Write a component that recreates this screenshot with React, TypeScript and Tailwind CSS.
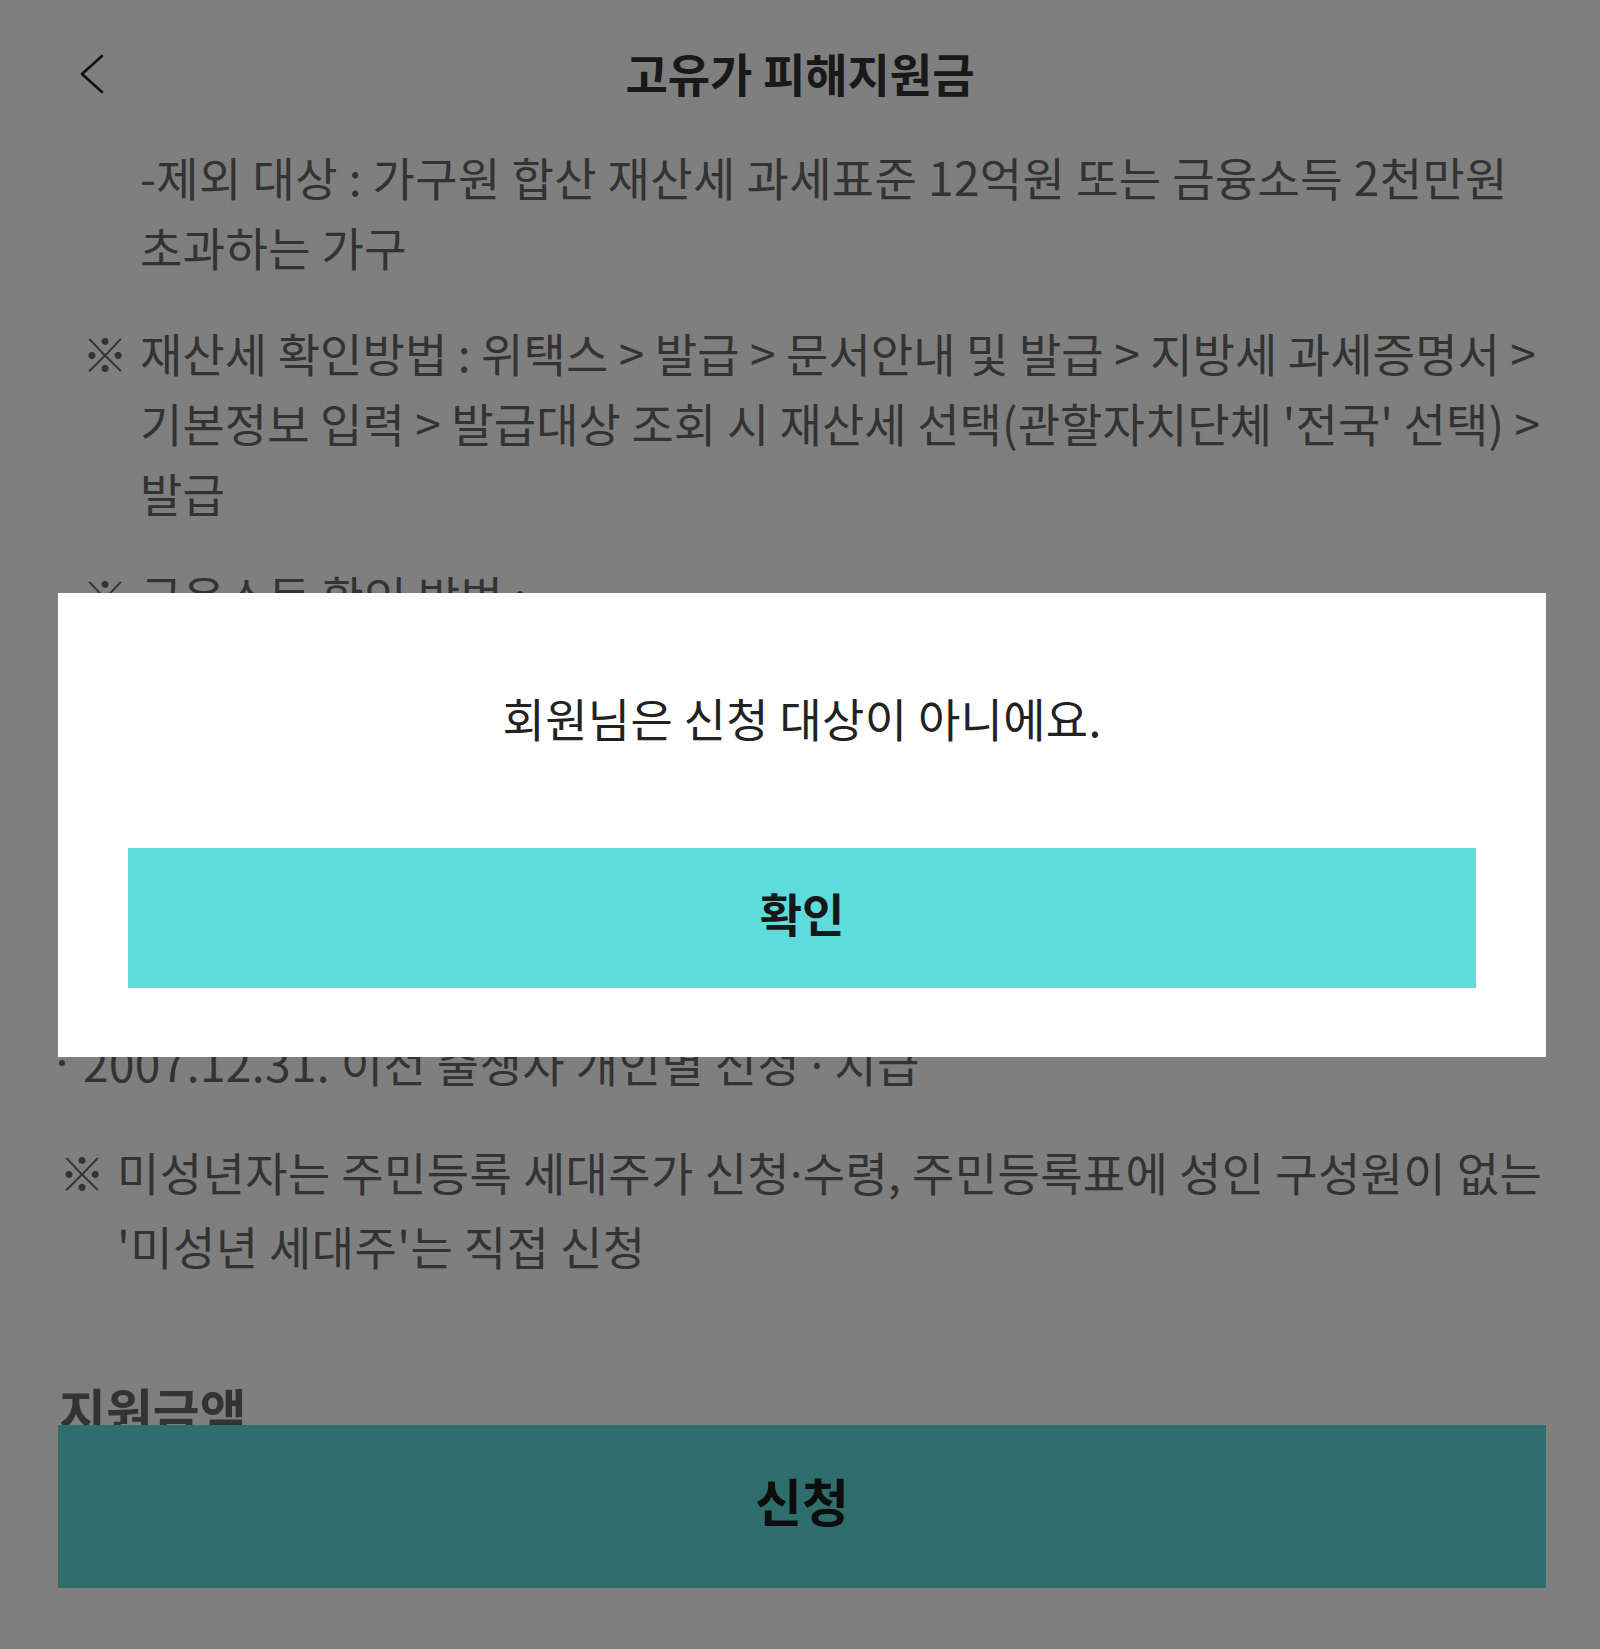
import { useState } from "react";

const font = "font-['Noto_Sans_CJK_KR','Noto_Sans',sans-serif]";

function Marker({ children, w = "w-[58px]" }: { children?: React.ReactNode; w?: string }) {
  return <span className={`${w} shrink-0`}>{children}</span>;
}

// 가운뎃점은 좁은 글꼴로
function Dot() {
  return <span className="font-['Noto_Sans',sans-serif]">·</span>;
}

export default function App() {
  const [open, setOpen] = useState(true);

  return (
    <div className={`min-h-screen w-full bg-white ${font}`}>
      {/* 헤더 */}
      <header className="grid h-[144px] grid-cols-[1fr_auto_1fr] items-center">
        <div className="pl-[80px] pt-[4px]">
          <svg width="24" height="40" viewBox="0 0 24 40" fill="none">
            <polyline points="22,2 2,20 22,38" stroke="#222" strokeWidth="2.6" strokeLinecap="round" strokeLinejoin="round" />
          </svg>
        </div>
        <h1 className="text-[46px] font-bold text-[#333]">고유가 피해지원금</h1>
        <div />
      </header>

      <main className="flex flex-col px-[59px] text-[46px] tracking-[0.4px] text-[#666] whitespace-nowrap">
        {/* 제외 대상 안내 */}
        <section className="-mt-[3px] flex flex-col pl-[23px] leading-[70px]">
          <div className="flex">
            <Marker />
            <p>
              -제외 대상 : 가구원 합산 재산세 과세표준 12억원 또는 금융소득 2천만원
              <br />
              초과하는 가구
            </p>
          </div>
          <div className="mt-[36px] flex">
            <Marker>※</Marker>
            <p className="tracking-[0.1px]">
              재산세 확인방법 : 위택스 &gt; 발급 &gt; 문서안내 및 발급 &gt; 지방세 과세증명서 &gt;
              <br />
              기본정보 입력 &gt; 발급대상 조회 시 재산세 선택(관할자치단체 '전국' 선택) &gt;
              <br />
              발급
            </p>
          </div>
          <div className="mt-[33px] flex">
            <Marker>※</Marker>
            <p>금융소득 확인 방법 :</p>
          </div>
        </section>

        {/* 신청 안내 */}
        <section className="mt-[396px] flex flex-col leading-[72px]">
          <div className="flex items-center">
            <Marker w="w-[24px]">
              <span className="block h-[6px] w-[6px] rounded-full bg-[#666]" />
            </Marker>
            <p>2007.12.31. 이전 출생자 개인별 신청 <Dot /> 지급</p>
          </div>
          <div className="mt-[35px] flex">
            <Marker>※</Marker>
            <p>
              미성년자는 주민등록 세대주가 신청<Dot />수령, 주민등록표에 성인 구성원이 없는
              <br />
              '미성년 세대주'는 직접 신청
            </p>
          </div>
          <h2 className="mt-[97px] text-[51px] font-bold leading-[64px] tracking-normal">지원금액</h2>
        </section>
      </main>

      {/* 하단 신청 버튼 */}
      <button className="fixed bottom-[61px] left-[58px] right-[54px] h-[163px] bg-[#5ddcdb] pb-[12px] text-[51px] font-bold text-[#1a1a1a]">
        신청
      </button>

      {/* 안내 팝업 */}
      {open && (
        <div className="fixed inset-0 flex items-center justify-center bg-black/50 pl-[4px]">
          <div className="flex h-[464px] w-[1488px] flex-col items-center bg-white px-[70px] pt-[94px]">
            <p className="text-[46px] leading-[60px] tracking-[0.3px] text-[#222]">회원님은 신청 대상이 아니에요.</p>
            <button
              onClick={() => setOpen(false)}
              className="mt-[101px] h-[140px] w-full bg-[#5ddcdb] pb-[10px] text-[46px] font-bold text-[#171717]"
            >
              확인
            </button>
          </div>
        </div>
      )}
    </div>
  );
}
